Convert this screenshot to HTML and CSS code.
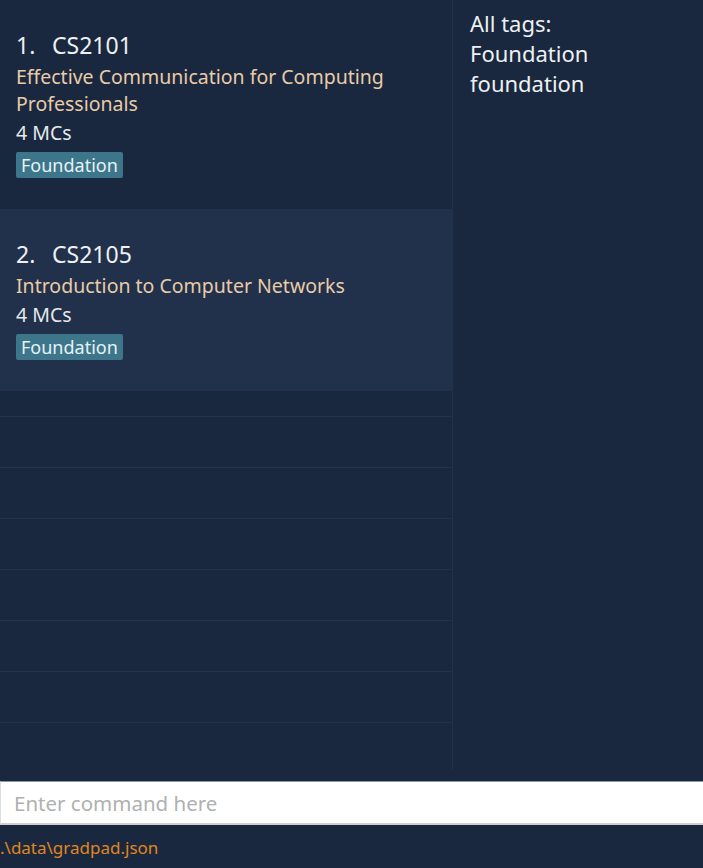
FILE: index.html
```html
<!DOCTYPE html>
<html>
<head>
<meta charset="utf-8">
<link rel="stylesheet" href="styles.css">
</head>
<body>
<div class="main">
  <div class="list">
    <div class="card">
      <div class="code"><span class="idx">1.</span>CS2101</div>
      <div class="title">Effective Communication for Computing Professionals</div>
      <div class="mcs">4 MCs</div>
      <div class="tags"><span class="tag">Foundation</span></div>
    </div>
    <div class="card alt">
      <div class="code"><span class="idx">2.</span>CS2105</div>
      <div class="title">Introduction to Computer Networks</div>
      <div class="mcs">4 MCs</div>
      <div class="tags"><span class="tag">Foundation</span></div>
    </div>
    <div class="row first"></div>
    <div class="row"></div>
    <div class="row"></div>
    <div class="row"></div>
    <div class="row"></div>
    <div class="row"></div>
    <div class="row"></div>
  </div>
  <div class="side">
    <div>All tags:</div>
    <div>Foundation</div>
    <div>foundation</div>
  </div>
</div>
<div class="command">
  <input class="cmd-input" type="text" placeholder="Enter command here">
</div>
<div class="status">.\data\gradpad.json</div>
</body>
</html>
```
FILE: styles.css
```css
html, body {
  margin: 0;
  padding: 0;
  background: #19283f;
  font-family: "Noto Sans", "Open Sans", sans-serif;
  overflow: hidden;
}
.main {
  display: flex;
  height: 770px;
}
.list {
  width: 452px;
  border-right: 1px solid #22324b;
  overflow: hidden;
  flex-shrink: 0;
}
.card {
  height: 209px;
  box-sizing: border-box;
  padding: 27.5px 16px 0 16px;
}
.card.alt {
  height: 182px;
  background: #21314b;
}
.code {
  color: #eef0f2;
  font-size: 23px;
  line-height: 35px;
}
.idx {
  display: inline-block;
  width: 36px;
}
.title {
  color: #e9cba8;
  font-size: 19.5px;
  line-height: 27px;
}
.mcs {
  color: #e6e8ea;
  font-size: 19.5px;
  line-height: 32px;
}
.tags {
  margin-top: 3.5px;
  display: flex;
}
.tag {
  background: #3d768b;
  color: #e8f2f6;
  font-size: 18px;
  line-height: 26px;
  padding: 0 5px;
  border-radius: 2px;
}
.row {
  height: 51px;
  box-sizing: border-box;
  border-bottom: 1px solid #22324b;
}
.row.first {
  height: 26px;
}
.side {
  flex: 1;
  padding: 8px 17px;
  color: #eef0f2;
  font-size: 22px;
  line-height: 30px;
}
.command {
  margin-top: 11px;
  height: 44px;
  box-sizing: border-box;
  background: #fff;
  border-top: 1px solid #8a97ad;
  border-bottom: 2px solid #cfcfcf;
  border-left: 1px solid #ddd;
  display: flex;
  align-items: center;
}
.cmd-input {
  border: none;
  outline: none;
  background: transparent;
  width: 100%;
  padding: 0 13px;
  font-family: "Noto Sans", "Open Sans", sans-serif;
  font-size: 20.5px;
  color: #333;
}
.cmd-input::placeholder {
  color: #b0b0b0;
}
.status {
  height: 43px;
  color: #e0861e;
  font-size: 17px;
  line-height: 45px;
  padding-left: 0;
}
```
